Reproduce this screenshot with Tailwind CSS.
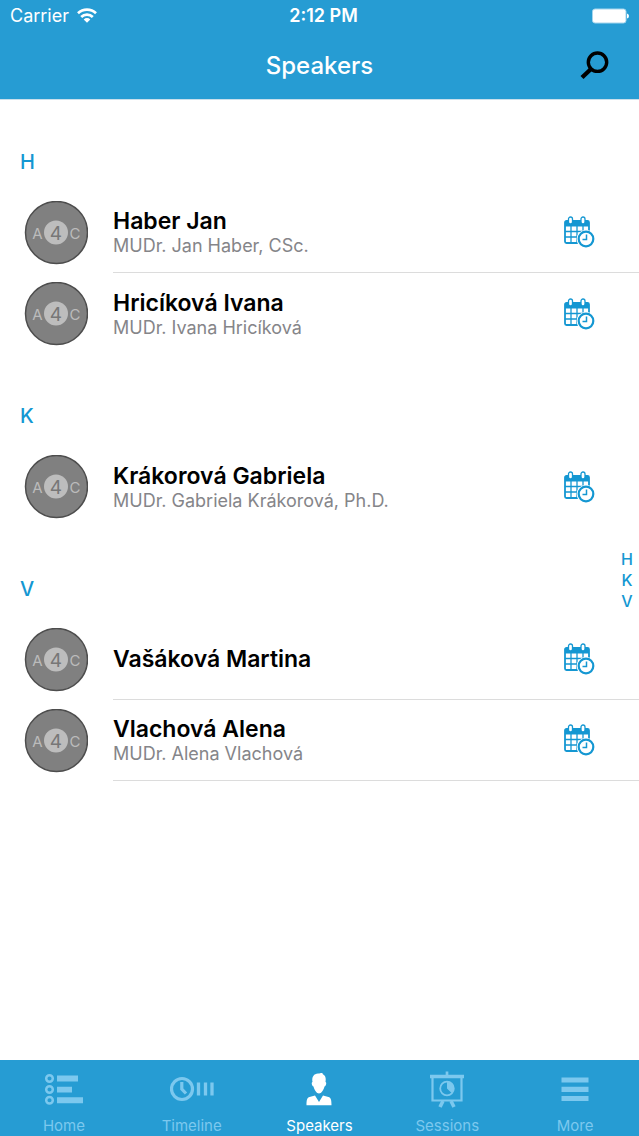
<!DOCTYPE html>
<html lang="en">
<head>
<meta charset="utf-8">
<meta name="viewport" content="width=device-width, initial-scale=1">
<title>Speakers</title>
<script src="https://cdn.jsdelivr.net/npm/@tailwindcss/browser@4"></script>
</head>
<body class="flex min-h-screen flex-col bg-white font-['Inter','Liberation_Sans',sans-serif] text-black">
<svg class="hidden" aria-hidden="true">
  <symbol id="avatar" viewBox="0 0 64 64">
    <circle cx="32.500" cy="31.500" r="31" fill="#808080" stroke="#4d4d4d" stroke-width="1.500"/>
    <circle cx="32" cy="31.500" r="12" fill="#bdbdbd"/>
    <g font-family="Inter, sans-serif" text-anchor="middle">
      <text x="13.500" y="38" font-size="15" fill="#bbb">A</text>
      <text x="32" y="38.500" font-size="19" fill="#777">4</text>
      <text x="51" y="38" font-size="15" fill="#bbb">C</text>
    </g>
  </symbol>
  <symbol id="calendar" viewBox="0 0 32 32">
    <rect x="2" y="5" width="24" height="22" rx="1.500" fill="none" stroke="#1497d2" stroke-width="1.800"/>
    <path d="M2 5h24v5.500H2z" fill="#1497d2"/>
    <path d="M8 10v17M14 10v17M20 10v17M2 15.500h24M2 21h24" stroke="#1497d2" stroke-width="1.300" fill="none"/>
    <rect x="5.500" y="1" width="4" height="7" rx="2" fill="#fff" stroke="#1497d2" stroke-width="1.300"/>
    <rect x="18" y="1" width="4" height="7" rx="2" fill="#fff" stroke="#1497d2" stroke-width="1.300"/>
    <circle cx="23" cy="23" r="9.300" fill="#fff"/>
    <circle cx="23" cy="23" r="7.300" fill="#fff" stroke="#1497d2" stroke-width="2.200"/>
    <path d="M23.500 18.500v5H19.500" fill="none" stroke="#1497d2" stroke-width="1.500"/>
  </symbol>
</svg>

<header class="border-b border-[#c9dfeb] bg-[#269cd3] text-white">
  <div class="grid h-8 grid-cols-[1fr_auto_1fr] items-center pr-2.5 pl-2.5">
    <div class="flex items-center gap-2 text-[18px] leading-8">
      <span>Carrier</span>
      <svg class="h-4 w-5" viewBox="0 0 20 16" fill="none" stroke="#fff" stroke-width="2.700" aria-label="Wi-Fi">
        <path d="M1 5.300a13 13 0 0 1 18 0M4.200 9a8.200 8.200 0 0 1 11.600 0"/>
        <path d="M6.700 11.400a4.700 4.700 0 0 1 6.600 0L10 14.800z" fill="#fff" stroke="none"/>
      </svg>
    </div>
    <div class="pl-2 text-center text-[18px] leading-8 font-semibold">2:12 PM</div>
    <svg class="h-4 w-[38px] justify-self-end" viewBox="0 0 38 16" aria-label="Battery full">
      <rect x="1.500" y="1" width="33.500" height="14" rx="2.500" fill="#fff" stroke="#a5d5ed"/>
      <path d="M36 5.500q2 .5 2 2.500t-2 2.500z" fill="#fff"/>
    </svg>
  </div>
  <div class="grid h-[67px] grid-cols-[1fr_auto_1fr] items-center px-7">
    <span></span>
    <h1 class="text-[24px] leading-8 font-medium">Speakers</h1>
    <button class="justify-self-end" type="button" aria-label="Search">
      <svg class="size-8" viewBox="0 0 32 32" fill="none" stroke="#000"><circle cx="18.500" cy="12.200" r="9.200" stroke-width="3.400"/><path d="M12.500 18.500 3 27.500" stroke-width="4.300"/></svg>
    </button>
  </div>
</header>

<main class="relative grow">
  <section>
    <h2 class="h-23 px-5 pt-12 text-[20px] leading-7 font-medium text-[#1497d2]">H</h2>
    <ul>
      <li class="flex h-[81px] items-stretch pl-6">
        <svg class="mr-[25px] size-16 self-center" role="img" aria-label="A4C"><use href="#avatar"/></svg>
        <div class="flex grow items-center border-b border-[#dcdcdc] pr-11">
          <div class="grow"><h3 class="text-[23px] leading-7 font-semibold">Haber Jan</h3><p class="text-[18px] leading-[22px] text-[#858589]">MUDr. Jan Haber, CSc.</p></div>
          <button type="button" aria-label="Schedule of Haber Jan"><svg class="size-8"><use href="#calendar"/></svg></button>
        </div>
      </li>
      <li class="flex h-[81px] items-stretch pl-6">
        <svg class="mr-[25px] size-16 self-center" role="img" aria-label="A4C"><use href="#avatar"/></svg>
        <div class="flex grow items-center pr-11">
          <div class="grow"><h3 class="text-[23px] leading-7 font-semibold">Hricíková Ivana</h3><p class="text-[18px] leading-[22px] text-[#858589]">MUDr. Ivana Hricíková</p></div>
          <button type="button" aria-label="Schedule of Hricíková Ivana"><svg class="size-8"><use href="#calendar"/></svg></button>
        </div>
      </li>
    </ul>
  </section>
  <section>
    <h2 class="h-23 px-5 pt-12 text-[20px] leading-7 font-medium text-[#1497d2]">K</h2>
    <ul>
      <li class="flex h-[81px] items-stretch pl-6">
        <svg class="mr-[25px] size-16 self-center" role="img" aria-label="A4C"><use href="#avatar"/></svg>
        <div class="flex grow items-center pr-11">
          <div class="grow"><h3 class="text-[23px] leading-7 font-semibold">Krákorová Gabriela</h3><p class="text-[18px] leading-[22px] text-[#858589]">MUDr. Gabriela Krákorová, Ph.D.</p></div>
          <button type="button" aria-label="Schedule of Krákorová Gabriela"><svg class="size-8"><use href="#calendar"/></svg></button>
        </div>
      </li>
    </ul>
  </section>
  <section>
    <h2 class="h-23 px-5 pt-12 text-[20px] leading-7 font-medium text-[#1497d2]">V</h2>
    <ul>
      <li class="flex h-[81px] items-stretch pl-6">
        <svg class="mr-[25px] size-16 self-center" role="img" aria-label="A4C"><use href="#avatar"/></svg>
        <div class="flex grow items-center border-b border-[#dcdcdc] pr-11">
          <div class="grow"><h3 class="text-[23px] leading-7 font-semibold">Vašáková Martina</h3></div>
          <button type="button" aria-label="Schedule of Vašáková Martina"><svg class="size-8"><use href="#calendar"/></svg></button>
        </div>
      </li>
      <li class="flex h-[81px] items-stretch pl-6">
        <svg class="mr-[25px] size-16 self-center" role="img" aria-label="A4C"><use href="#avatar"/></svg>
        <div class="flex grow items-center border-b border-[#dcdcdc] pr-11">
          <div class="grow"><h3 class="text-[23px] leading-7 font-semibold">Vlachová Alena</h3><p class="text-[18px] leading-[22px] text-[#858589]">MUDr. Alena Vlachová</p></div>
          <button type="button" aria-label="Schedule of Vlachová Alena"><svg class="size-8"><use href="#calendar"/></svg></button>
        </div>
      </li>
    </ul>
  </section>
  <nav class="absolute inset-y-0 right-0 flex w-6 flex-col items-center justify-center text-[16px] leading-[21px] font-medium text-[#1497d2]" aria-label="Index">
    <a href="#">H</a><a href="#">K</a><a href="#">V</a>
  </nav>
</main>

<nav class="grid h-19 grid-cols-5 bg-[#269cd3] text-center text-[15px] leading-5 text-[#7cc8ee]" aria-label="Tabs">
  <a href="#" class="flex flex-col items-center gap-1 pt-2.5">
    <svg class="h-[42px] w-11" viewBox="0 0 44 42"><g fill="none" stroke="currentColor" stroke-width="2.500"><circle cx="7.500" cy="8.500" r="3.300"/><circle cx="7.500" cy="19.500" r="3.300"/><circle cx="7.500" cy="30.300" r="3.300"/></g><path d="M15 5.500h21v6H15zM15 16.700h15v5.800H15zM15 27.300h26v6H15z" fill="currentColor"/></svg>
    <span>Home</span>
  </a>
  <a href="#" class="flex flex-col items-center gap-1 pt-2.5">
    <svg class="h-[42px] w-11" viewBox="0 0 44 42" fill="none" stroke="currentColor"><circle cx="12" cy="19" r="10.500" stroke-width="3.200"/><path d="M11.800 12v7l4.200 4.500" stroke-width="3.200"/><path d="M28.500 12.500V25.500M35.500 12.500V25.500M42 12.500V25.500" stroke-width="3.300"/></svg>
    <span>Timeline</span>
  </a>
  <a href="#" class="flex flex-col items-center gap-1 pt-2.5 text-white" aria-current="page">
    <svg class="h-[42px] w-11" viewBox="0 0 44 42" fill="currentColor"><path d="M15.500 12C14.500 7 17 3.500 21 3.500c2 0 3-.8 4.500-.5-.2 1 .3 1.200 1.500 2 1.800 1.500 2 4 1.500 7 1.500.5.500 4-1 4.500-.8 3.500-3.200 7-5.500 7s-4.700-3.500-5.500-7c-1.500-.5-2.500-4-1-4.500z"/><path d="M9.500 35.300c0-5.300.5-7.500 3-8.300l5.500-1.500 4 6.500 4-6.500 5.500 1.500c2.500.8 3 3 3 8.300z"/></svg>
    <span>Speakers</span>
  </a>
  <a href="#" class="flex flex-col items-center gap-1 pt-2.5">
    <svg class="h-[42px] w-11" viewBox="0 0 44 42" fill="none" stroke="currentColor"><path d="M22 1.500V6" stroke-width="2.700"/><path d="M5 6.500h34" stroke-width="3.300"/><path d="M7.500 7v23.500h29V7" stroke-width="2.200"/><circle cx="22" cy="18.500" r="6.800" stroke-width="1.800"/><path d="M22 18.500v-6.500a6.500 6.500 0 0 1 4.600 11.100z" fill="currentColor" stroke="none"/><path d="m18 31-3 6M26 31l3 6" stroke-width="3.600"/></svg>
    <span>Sessions</span>
  </a>
  <a href="#" class="flex flex-col items-center gap-1 pt-2.5">
    <svg class="h-[42px] w-11" viewBox="0 0 44 42"><path d="M8.500 7.500h27v5h-27zM8.500 16.700h27v5.300h-27zM8.500 26h27v5h-27z" fill="currentColor"/></svg>
    <span>More</span>
  </a>
</nav>
</body>
</html>
